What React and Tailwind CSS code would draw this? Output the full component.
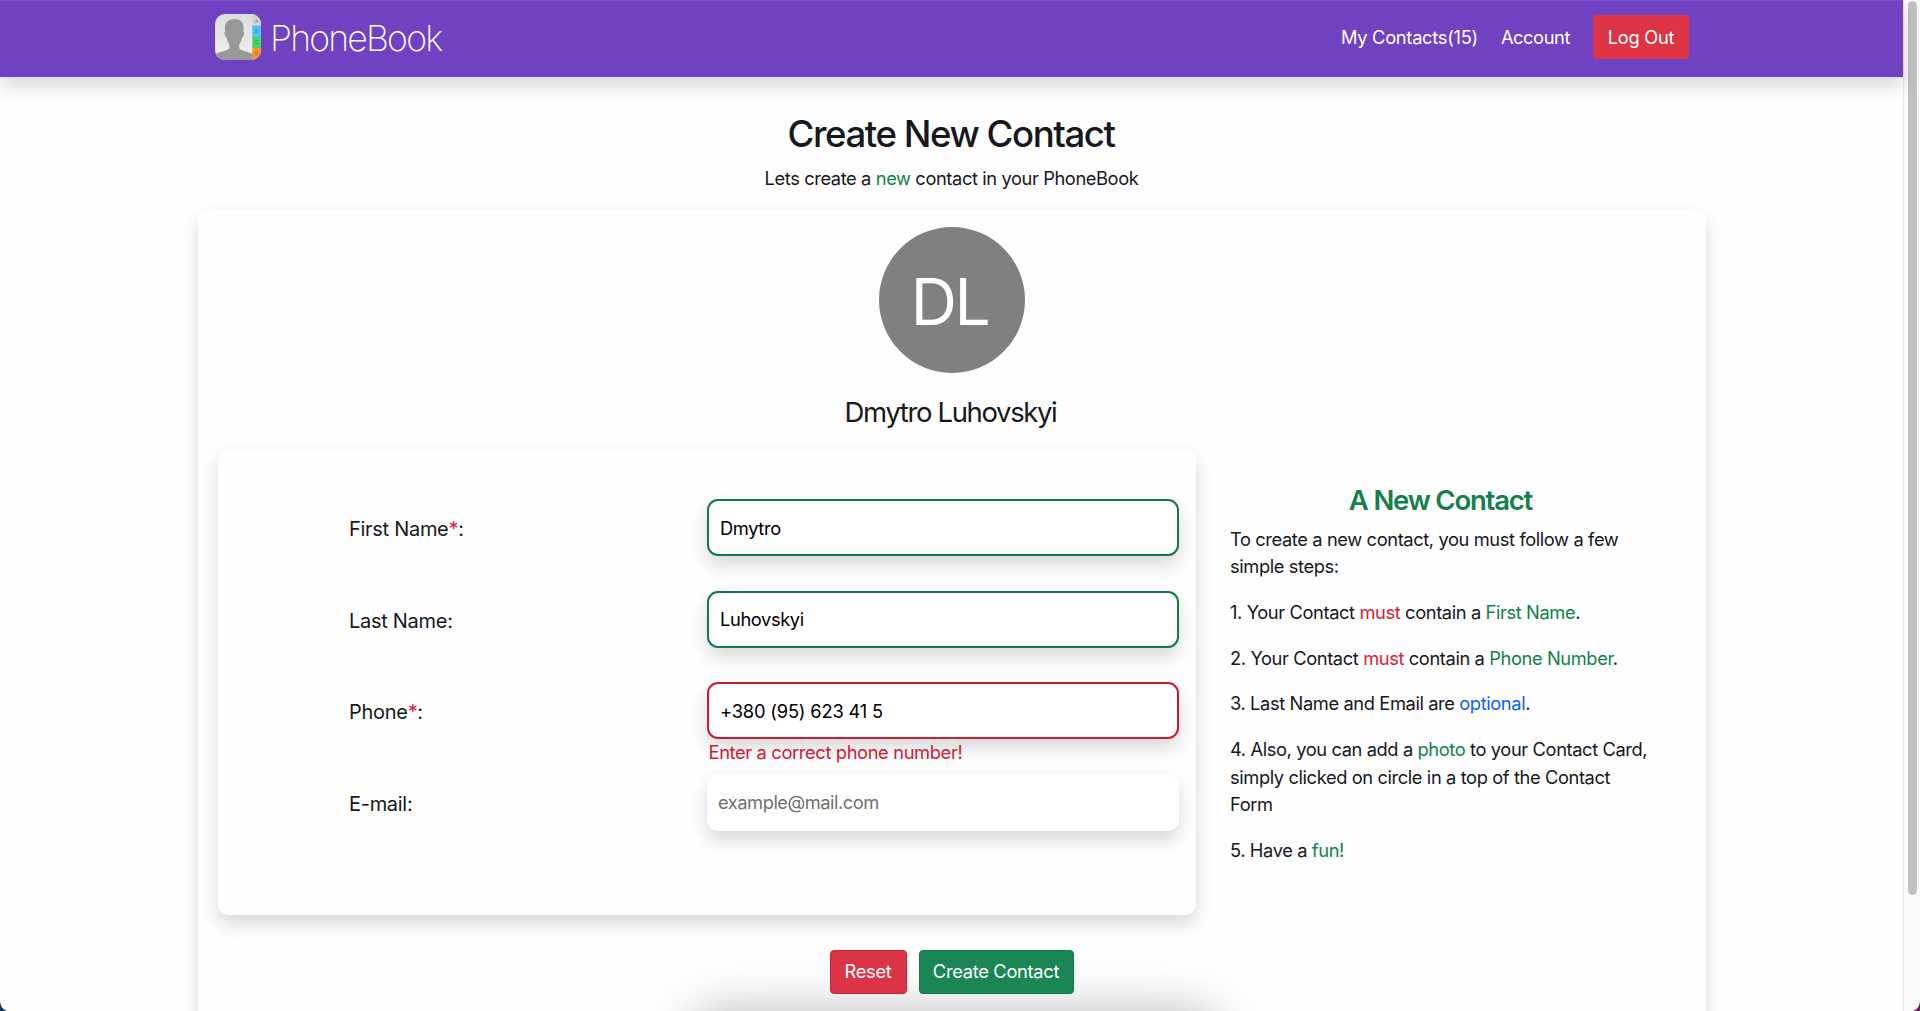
const fieldShadow = "shadow-[0_9px_18px_rgba(0,0,0,0.15)]";

function Green({ children }) {
  return <span className="text-[#0f8246]">{children}</span>;
}

function Red({ children }) {
  return <span className="text-[#dc1f35]">{children}</span>;
}

function Logo() {
  return (
    <svg className="h-[46px] w-[46px]" viewBox="0 0 46 46">
      <defs>
        <clipPath id="logo-frame">
          <rect width="46" height="46" rx="10" />
        </clipPath>
        <linearGradient id="logo-paper" x1="0" y1="0" x2="0" y2="1">
          <stop offset="0" stopColor="#dedede" />
          <stop offset="1" stopColor="#f0f0f0" />
        </linearGradient>
      </defs>
      <g clipPath="url(#logo-frame)">
        <rect width="46" height="46" fill="url(#logo-paper)" />
        <path
          d="M19.300 5C13 5 9.800 8.500 10 14.500c0 1.200.1 2.200.3 3.100-.8.3-.9 1.400-.6 2.900.3 1.700 1 2.700 1.900 3 .5 2.700 1.400 5 2.800 7v3.200c-.2 1.200-1.200 1.900-3 2.500C7.500 37.500 3.500 38.300 0 40.300V46h38v-6c-3.500-1.800-7-2.500-10.800-3.800-1.800-.6-2.800-1.300-3-2.500v-3.200c1.400-2 2.300-4.300 2.800-7 .9-.3 1.600-1.300 1.900-3 .3-1.500.2-2.600-.6-2.900.2-.9.3-1.900.3-3.100C28.800 8.500 25.600 5 19.300 5Z"
          fill="#989898"
        />
        <rect x="37.300" width="9" height="12" fill="#d3d3d3" />
        <rect x="37.300" y="11.600" width="9" height="11.500" fill="#4cc3fa" />
        <rect x="37.300" y="22.800" width="9" height="11.500" fill="#43d567" />
        <rect x="37.300" y="34" width="9" height="12" fill="#fb9328" />
        <g fontFamily="Inter, sans-serif" fontSize="4.500" textAnchor="middle" fontWeight="500">
          <text x="41.500" y="9" fill="#8a8a8a">A</text>
          <text x="41.500" y="19" fill="#1f86b8">B</text>
          <text x="41.500" y="30.400" fill="#1d9440">C</text>
          <text x="41.500" y="41" fill="#b65f10">D</text>
        </g>
      </g>
    </svg>
  );
}

function Navbar() {
  return (
    <header className="relative flex h-[77px] shrink-0 items-start justify-between border-t border-[#7b50c4] bg-[#7041c0] pr-[214px] pl-[215px] text-white shadow-[0_1px_0_#e6dcf5,0_9px_18px_rgba(0,0,0,0.15)]">
      <a className="mt-[13px] flex items-start">
        <Logo />
        <span className="ml-[9px] pt-[2px] text-[35.500px] leading-[46px] font-extralight tracking-[-1.760px]">PhoneBook</span>
      </a>
      <nav className="mt-[14px] flex items-center leading-[44px]">
        <a className="tracking-[-0.290px]">My Contacts(15)</a>
        <a className="ml-[23px] tracking-[-0.420px]">Account</a>
        <button className="ml-[23px] h-[44px] w-[96px] rounded-[4px] bg-[#dd3545] tracking-[-0.250px]">Log Out</button>
      </nav>
    </header>
  );
}

function Field({ label, required, value, placeholder, tone, error }) {
  const look =
    tone === "valid"
      ? "border-2 border-[#117a45] px-[11px] tracking-[-0.380px]"
      : tone === "invalid"
        ? "border-2 border-[#cb1c2f] px-[11px] tracking-[-0.180px]"
        : "px-[11px] tracking-[-0.460px]";
  return (
    <div className="flex h-[91.500px] items-start">
      <label className="w-[358px] text-[20px] leading-[60px] tracking-[-0.290px]">
        {label}
        {required && <Red>*</Red>}:
      </label>
      <div className="w-[472px]">
        <input
          className={`block h-[57px] w-full rounded-[11px] bg-white text-black outline-none placeholder:text-[#707070] ${fieldShadow} ${look}`}
          defaultValue={value}
          placeholder={placeholder}
        />
        {error && <p className="pl-[1.500px] leading-[27.500px] tracking-[-0.360px] text-[#cf1b30]">{error}</p>}
      </div>
    </div>
  );
}

function Guide() {
  return (
    <aside className="ml-[34px] w-[422px] pt-[34.500px]">
      <h2 className="mb-[9px] text-center text-[27.500px] leading-[33px] font-semibold tracking-[-1.200px] text-[#14804a]">A New Contact</h2>
      <div className="space-y-[18.300px] pl-[0.500px] leading-[27.500px] tracking-[-0.390px]">
        <p>
          To create a new contact, you must follow a few
          <br />
          simple steps:
        </p>
        <p>
          1. Your Contact <Red>must</Red> contain a <Green>First Name</Green>.
        </p>
        <p>
          2. Your Contact <Red>must</Red> contain a <Green>Phone Number</Green>.
        </p>
        <p>
          3. Last Name and Email are <span className="text-[#0d63f0]">optional</span>.
        </p>
        <p>
          4. Also, you can add a <Green>photo</Green> to your Contact Card,
          <br />
          simply clicked on circle in a top of the Contact
          <br />
          Form
        </p>
        <p>
          5. Have a <Green>fun!</Green>
        </p>
      </div>
    </aside>
  );
}

export default function App() {
  return (
    <div className="relative flex h-[1011px] w-full overflow-hidden bg-[#fefefe] font-['Inter','Liberation_Sans',sans-serif] text-[18.300px] text-[#15181c]">
      <div className="flex h-full flex-1 flex-col">
        <Navbar />
        <main className="flex flex-1 flex-col items-center">
          <h1 className="mt-[35px] pr-px text-[36.600px] leading-[44px] font-medium tracking-[-1.440px]">Create New Contact</h1>
          <p className="mt-[9px] leading-[27.500px] tracking-[-0.400px]">
            Lets create a <Green>new</Green> contact in your PhoneBook
          </p>
          <section className="mt-[17.500px] flex h-[900px] w-[1508px] shrink-0 flex-col rounded-[11px] bg-[#fefefe] pt-[17px] shadow-[0_9px_18px_rgba(0,0,0,0.15)]">
            <div className="mx-auto flex h-[146px] w-[146px] items-center justify-center rounded-full bg-[#808080] pt-[4px] pr-[4px] text-[64px] leading-none tracking-[-2.500px] text-white">
              DL
            </div>
            <p className="mt-[22.500px] pr-[2px] text-center text-[27.500px] leading-[33px] tracking-[-1.370px]">Dmytro Luhovskyi</p>
            <div className="mt-[20.500px] flex pl-[20px]">
              <form className="h-[466px] w-[978px] rounded-[11px] bg-[#fefefe] pt-[50px] pl-[131.500px] shadow-[0_9px_18px_rgba(0,0,0,0.15)]">
                <Field label="First Name" required value="Dmytro" tone="valid" />
                <Field label="Last Name" value="Luhovskyi" tone="valid" />
                <Field label="Phone" required value="+380 (95) 623 41 5" tone="invalid" error="Enter a correct phone number!" />
                <Field label="E-mail" placeholder="example@mail.com" />
              </form>
              <Guide />
            </div>
            <div className="relative z-10 mt-[34.500px] flex justify-center gap-[12px] text-white">
              <button className="h-[44px] w-[77px] rounded-[4px] border border-[#c92138] bg-[#dd3547] tracking-[-0.250px]">Reset</button>
              <button className="h-[44px] w-[155px] rounded-[4px] border border-[#147645] bg-[#1b8655] tracking-[-0.300px]">Create Contact</button>
            </div>
          </section>
        </main>
        <div className="absolute top-[1022px] left-[700px] h-[60px] w-[508px] rounded-[20px] shadow-[0_0_50px_10px_rgba(0,0,0,0.27)]" />
      </div>
      <div className="h-full w-[17px] border-l border-[#e8e8e8] bg-[#fafafa] pt-px pl-[4px]">
        <div className="h-[894px] w-[9px] rounded-full bg-[#c1c1c1]" />
      </div>
      <svg className="absolute bottom-0 left-0 h-[10px] w-[7px]" viewBox="0 0 7 10">
        <path d="M0 0C.6 5 2.500 8.500 7 10H0Z" fill="#16365f" />
      </svg>
      <svg className="absolute right-0 bottom-0 h-[10px] w-[7px]" viewBox="0 0 7 10">
        <path d="M7 0C6.400 5 4.500 8.500 0 10H7Z" fill="#6b2754" />
      </svg>
    </div>
  );
}
